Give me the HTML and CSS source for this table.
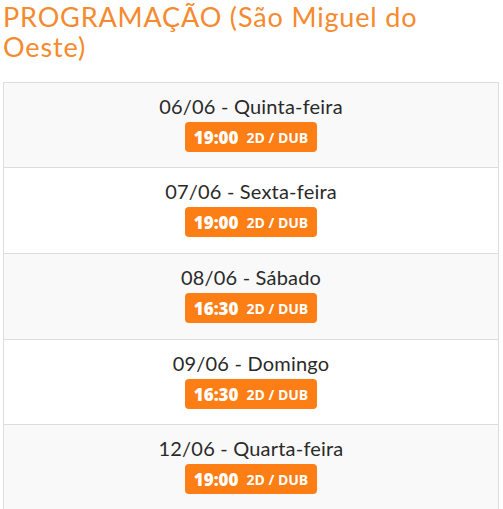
FILE: index.html
```html
<!DOCTYPE html>
<html lang="pt">
<head>
<meta charset="utf-8">
<link rel="stylesheet" href="styles.css">
</head>
<body>
<h2 class="title">PROGRAMAÇÃO (São Miguel do Oeste)</h2>
<div class="sessions">
  <div class="row">
    <div class="date">06/06 - Quinta-feira</div>
    <span class="badge"><b>19:00</b><small>2D / DUB</small></span>
  </div>
  <div class="row">
    <div class="date">07/06 - Sexta-feira</div>
    <span class="badge"><b>19:00</b><small>2D / DUB</small></span>
  </div>
  <div class="row">
    <div class="date">08/06 - Sábado</div>
    <span class="badge"><b>16:30</b><small>2D / DUB</small></span>
  </div>
  <div class="row">
    <div class="date">09/06 - Domingo</div>
    <span class="badge"><b>16:30</b><small>2D / DUB</small></span>
  </div>
  <div class="row">
    <div class="date">12/06 - Quarta-feira</div>
    <span class="badge"><b>19:00</b><small>2D / DUB</small></span>
  </div>
</div>
</body>
</html>
```
FILE: styles.css
```css
html, body { margin: 0; padding: 0; background: #fff; }
body { padding: 0 4px 0 3px; font-family: Lato, "Open Sans", sans-serif; }
.title {
  margin: 0;
  padding-top: 2px;
  max-width: 470px;
  font-weight: 400;
  font-size: 27px;
  letter-spacing: 0.85px;
  line-height: 30px;
  color: #f58a2e;
  height: 80px;
}
.sessions {
  border: 1px solid #dddddd;
}
.row {
  height: 86px;
  border-top: 1px solid #dddddd;
  display: flex;
  flex-direction: column;
  align-items: center;
  padding-top: 11px;
  box-sizing: border-box;
}
.row:first-child { border-top: none; height: 84px; padding-top: 11px; }
.row:nth-child(4) { height: 85px; }
.row:nth-child(odd) { background: #f9f9f9; }
.date {
  font-size: 20px;
  line-height: 24px;
  color: #2a2a2a;
  letter-spacing: 0.2px;
  margin-bottom: 4px;
}
.badge {
  display: flex;
  align-items: center;
  justify-content: center;
  gap: 8px;
  width: 132px;
  height: 30px;
  border-radius: 4px;
  background: #fd7e14;
  color: #fff;
  font-family: "Open Sans", sans-serif;
  font-weight: 700;
}
.badge b { font-size: 17px; font-weight: 800; }
.badge small { font-size: 14px; font-weight: 700; }
```
